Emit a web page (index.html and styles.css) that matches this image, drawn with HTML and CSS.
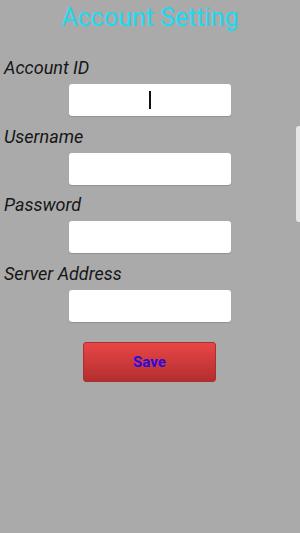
FILE: index.html
```html
<!DOCTYPE html>
<html lang="en">
<head>
    <meta charset="UTF-8">
    <meta name="viewport" content="width=device-width, initial-scale=1.0">
    <title>Account Setting</title>
    <link rel="stylesheet" href="styles.css">
</head>
<body>
    <div class="screen">
        <h1 class="title">Account Setting</h1>
        <form class="settings">
            <div class="form-group">
                <label class="label">Account ID</label>
                <div class="field focused"><span class="caret"></span></div>
            </div>
            <div class="form-group">
                <label class="label">Username</label>
                <div class="field"></div>
            </div>
            <div class="form-group">
                <label class="label">Password</label>
                <div class="field"></div>
            </div>
            <div class="form-group">
                <label class="label">Server Address</label>
                <div class="field"></div>
            </div>
            <button type="button" class="save-btn">Save</button>
        </form>
        <div class="scrollbar"></div>
    </div>
</body>
</html>
```

FILE: styles.css
```css
html, body {
    margin: 0;
    height: 100%;
}
body {
    background-color: #aaaaaa;
    font-family: Roboto, "Liberation Sans", sans-serif;
}
.screen {
    position: relative;
    height: 100%;
}
.title {
    margin: 0;
    padding-top: 2px;
    text-align: center;
    color: #1fd9f0;
    font-size: 25px;
    font-weight: normal;
    line-height: 32px;
}
.settings {
    margin-top: 24px;
}
.form-group {
    margin-bottom: 10.5px;
}
.label {
    display: block;
    padding-left: 4px;
    font-size: 18px;
    font-style: italic;
    font-weight: normal;
    line-height: 20px;
    color: #161616;
}
.field {
    display: flex;
    justify-content: center;
    align-items: center;
    margin: 6px 0 0 69px;
    width: 162px;
    height: 32px;
    background-color: #ffffff;
    border-radius: 3px;
    box-shadow: 0 1px 1px rgba(0,0,0,0.15);
}
.caret {
    width: 2px;
    height: 18px;
    background-color: #111111;
}
.save-btn {
    display: block;
    margin: 20px 0 0 83px;
    width: 133px;
    height: 40px;
    border: 1px solid #a83030;
    border-radius: 3px;
    background: linear-gradient(#e94646, #b32e2e);
    color: #2a0ae0;
    font-family: Roboto, "Liberation Sans", sans-serif;
    font-size: 15px;
    font-weight: bold;
    cursor: pointer;
}
.scrollbar {
    position: absolute;
    right: 0;
    top: 126px;
    width: 4px;
    height: 96px;
    background-color: #e6e6e6;
    border-radius: 3px 0 0 3px;
}
```
